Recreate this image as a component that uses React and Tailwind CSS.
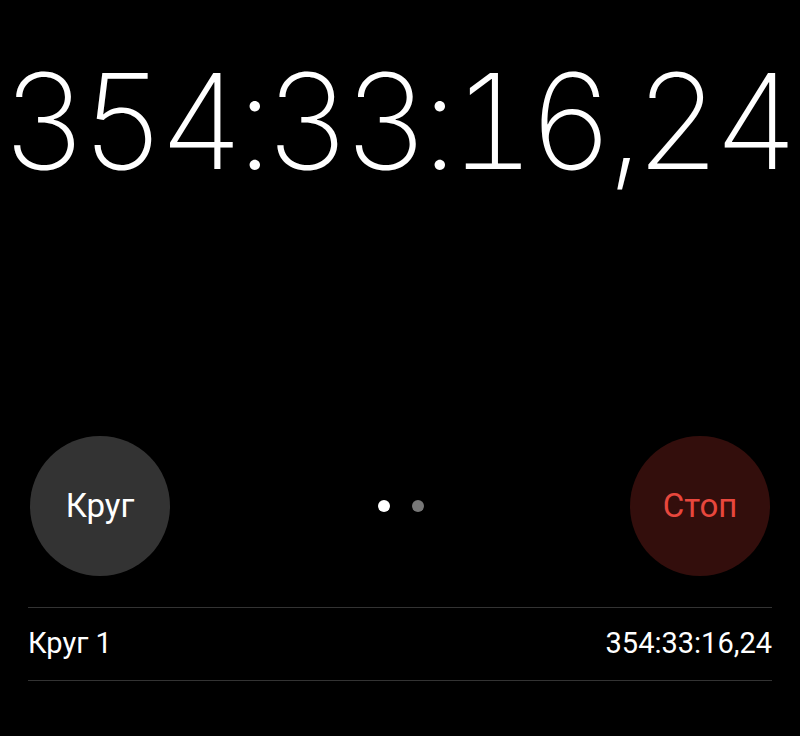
export default function App() {
  return (
    <div className="w-[800px] h-[736px] bg-black text-white overflow-hidden flex flex-col" style={{ fontFamily: 'Roboto, "Noto Sans", sans-serif' }}>
      <div className="h-[436px] flex justify-center pt-[46px]">
        <div className="text-[132px] leading-[150px] tracking-[-7px] tabular-nums whitespace-nowrap pr-[6px]" style={{ fontFamily: 'Inter, Roboto, sans-serif', fontWeight: 200 }}>
          354:33:16,24
        </div>
      </div>
      <div className="flex items-center justify-between px-[30px]">
        <div className="w-[140px] h-[140px] rounded-full bg-[#333333] flex items-center justify-center text-[33px] text-white">
          Круг
        </div>
        <div className="flex items-center gap-[22px] ml-[2px]">
          <div className="w-[12px] h-[12px] rounded-full bg-white"></div>
          <div className="w-[12px] h-[12px] rounded-full bg-[#777777]"></div>
        </div>
        <div className="w-[140px] h-[140px] rounded-full bg-[#330e0c] flex items-center justify-center text-[33px] text-[#e8473d]">
          Стоп
        </div>
      </div>
      <div className="mx-[28px] mt-[31px] border-t border-[#333333]">
        <div className="h-[73px] flex items-center justify-between text-[29px] border-b border-[#333333]">
          <span>Круг 1</span>
          <span>354:33:16,24</span>
        </div>
      </div>
    </div>
  );
}
